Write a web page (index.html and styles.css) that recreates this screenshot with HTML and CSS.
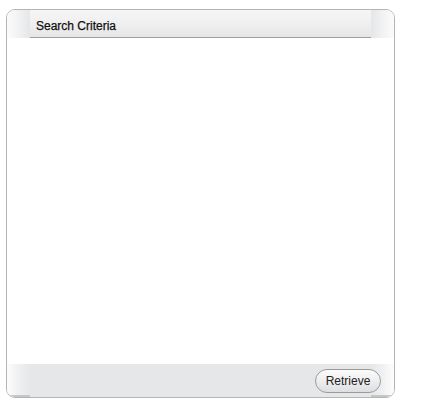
FILE: index.html
```html
<!DOCTYPE html>
<html>
<head>
<meta charset="utf-8">
<link rel="stylesheet" href="styles.css">
</head>
<body>
<div class="panel">
  <div class="head">
    <div class="cap cap-l"></div>
    <div class="title">Search Criteria</div>
    <div class="cap cap-r"></div>
  </div>
  <div class="body"></div>
  <div class="foot">
    <button class="btn">Retrieve</button>
  </div>
</div>
</body>
</html>
```
FILE: styles.css
```css
html, body { margin: 0; padding: 0; background: #fff; }
body { padding: 9px 0 0 6px; font-family: "Liberation Sans", Arial, sans-serif; }
.panel {
  width: 387px;
  height: 387px;
  border: 1px solid #b4b4b4;
  border-radius: 9px;
  overflow: hidden;
  display: flex;
  flex-direction: column;
  background: #fff;
}
.head { display: flex; height: 28px; flex: none; }
.cap { width: 23px; flex: none; }
.cap-l { background: linear-gradient(to right, #fbfbfb 0%, #f3f4f5 40%, #e4e6e8 100%); }
.cap-r { background: linear-gradient(to left, #fbfbfb 0%, #f3f4f5 40%, #e4e6e8 100%); }
.title {
  flex: 1;
  background: linear-gradient(to bottom, #f6f6f6 0%, #eeeeee 60%, #e6e6e6 100%);
  border-bottom: 1px solid #a0a0a0;
  font-size: 12px;
  font-weight: normal;
  color: #111;
  padding: 9px 0 0 6px;
  box-sizing: border-box;
  -webkit-text-stroke: 0.25px #111;
}
.body { flex: 1; }
.foot {
  height: 33px;
  flex: none;
  box-sizing: border-box;
  display: flex;
  justify-content: flex-end;
  align-items: flex-start;
  padding: 5px 13px 0 0;
  background:
    linear-gradient(#c4c6c8, #c4c6c8) left bottom / 23px 2px no-repeat,
    linear-gradient(#c4c6c8, #c4c6c8) right bottom / 23px 2px no-repeat,
    linear-gradient(to right, #fdfdfd 0%, #eff0f1 50%, #e6e7e8 100%) left top / 23px 100% no-repeat,
    linear-gradient(to left, #fdfdfd 0%, #eff0f1 50%, #e6e7e8 100%) right top / 23px 100% no-repeat,
    #e6e7e8;
}
.btn {
  font-family: "Liberation Sans", Arial, sans-serif;
  font-size: 12px;
  color: #222;
  height: 24px;
  width: 66px;
  padding: 0;
  border: 1px solid #9a9a9a;
  border-radius: 12px;
  background: linear-gradient(to bottom, #fbfbfb 0%, #eeeeee 50%, #dcdee2 100%);
}
```
